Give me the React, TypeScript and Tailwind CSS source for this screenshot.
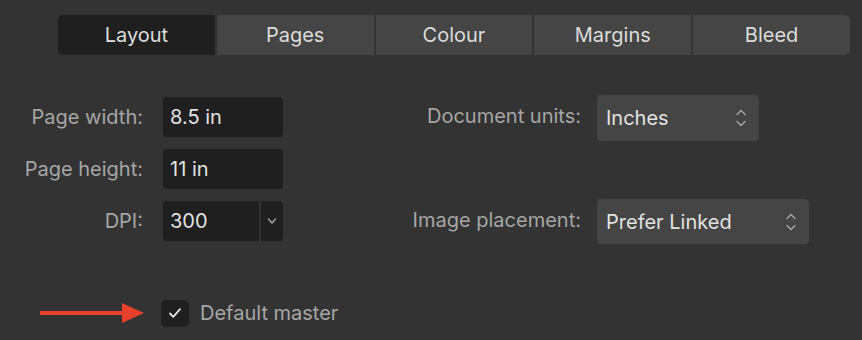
import React from 'react';

const tabs = ['Layout', 'Pages', 'Colour', 'Margins', 'Bleed'];

const Stepper = () => (
  <svg width="12" height="22" viewBox="0 0 12 22" fill="none" stroke="#a9a9a9" strokeWidth="1.3" strokeLinecap="round" strokeLinejoin="round">
    <path d="M2 7.5 L6 3.5 L10 7.5" />
    <path d="M2 14.5 L6 18.5 L10 14.5" />
  </svg>
);

const Field = ({ label, value }: { label: string; value: string }) => (
  <div className="flex items-center">
    <span className="w-[143px] text-right text-[20px] text-[#a6a6a6]">{label}</span>
    <div className="ml-5 flex h-10 w-[120px] items-center rounded-[4px] bg-[#1f1f1f] pl-[7px] text-[20px] text-[#e2e2e2]">
      {value}
    </div>
  </div>
);

export default function App() {
  return (
    <div
      className="h-[340px] w-[862px] overflow-hidden bg-[#333333]"
      style={{ fontFamily: 'Inter, "Noto Sans", sans-serif' }}
    >
      {/* tab strip */}
      <div className="ml-[58px] mt-[15px] flex w-[792px] gap-[2px]">
        {tabs.map((t, i) => (
          <div
            key={t}
            className={
              'flex h-10 flex-1 items-center justify-center text-[20px] text-[#dcdcdc] ' +
              (i === 0 ? 'rounded-l-[5px] bg-[#1f1f1f] ' : 'bg-[#454545] ') +
              (i === tabs.length - 1 ? 'rounded-r-[5px]' : '')
            }
          >
            {t}
          </div>
        ))}
      </div>

      <div className="mt-[40px] flex">
        {/* left column */}
        <div className="flex flex-col gap-3 pt-[2px]">
          <Field label="Page width:" value="8.5 in" />
          <Field label="Page height:" value="11 in" />
          <div className="flex items-center">
            <span className="w-[143px] text-right text-[20px] text-[#a6a6a6]">DPI:</span>
            <div className="ml-5 flex h-10 w-[120px] overflow-hidden rounded-[4px]">
              <div className="flex flex-1 items-center bg-[#1f1f1f] pl-[7px] text-[20px] text-[#e2e2e2]">300</div>
              <div className="flex w-6 items-center justify-center border-l-2 border-[#333333] bg-[#1f1f1f]">
                <svg width="10" height="8" viewBox="0 0 10 8" fill="none" stroke="#a9a9a9" strokeWidth="1.3" strokeLinecap="round" strokeLinejoin="round">
                  <path d="M1.5 2 L5 6 L8.5 2" />
                </svg>
              </div>
            </div>
          </div>
        </div>

        {/* right column */}
        <div className="ml-[60px] flex flex-col gap-[58px]">
          <div className="flex items-center">
            <span className="w-[238px] pb-1 text-right text-[20px] text-[#a6a6a6]">Document units:</span>
            <div className="ml-4 flex h-[46px] w-[162px] items-center justify-between rounded-[4px] bg-[#454545] pl-[9px] pr-3 text-[20px] text-[#e2e2e2]">
              Inches
              <Stepper />
            </div>
          </div>
          <div className="flex items-center">
            <span className="w-[238px] pb-1 text-right text-[20px] text-[#a6a6a6]">Image placement:</span>
            <div className="ml-4 flex h-[45px] w-[212px] items-center justify-between rounded-[4px] bg-[#454545] pl-[9px] pr-3 text-[20px] text-[#e2e2e2]">
              Prefer Linked
              <Stepper />
            </div>
          </div>
        </div>
      </div>

      {/* default master */}
      <div className="mt-[54px] flex items-center">
        <svg className="ml-[40px]" width="105" height="22" viewBox="0 0 105 22">
          <rect x="0" y="9" width="86" height="4" fill="#e8402a" />
          <polygon points="82,1 104,11 82,21" fill="#e8402a" />
        </svg>
        <div className="ml-[16px] flex h-[27px] w-[28px] items-center justify-center rounded-[5px] bg-[#1f1f1f]">
          <svg width="14" height="12" viewBox="0 0 14 12" fill="none" stroke="#e6e6e6" strokeWidth="1.8" strokeLinecap="round" strokeLinejoin="round">
            <path d="M2 6.5 L5.3 9.8 L12 2.2" />
          </svg>
        </div>
        <span className="ml-[11px] text-[20px] text-[#a6a6a6]">Default master</span>
      </div>
    </div>
  );
}
